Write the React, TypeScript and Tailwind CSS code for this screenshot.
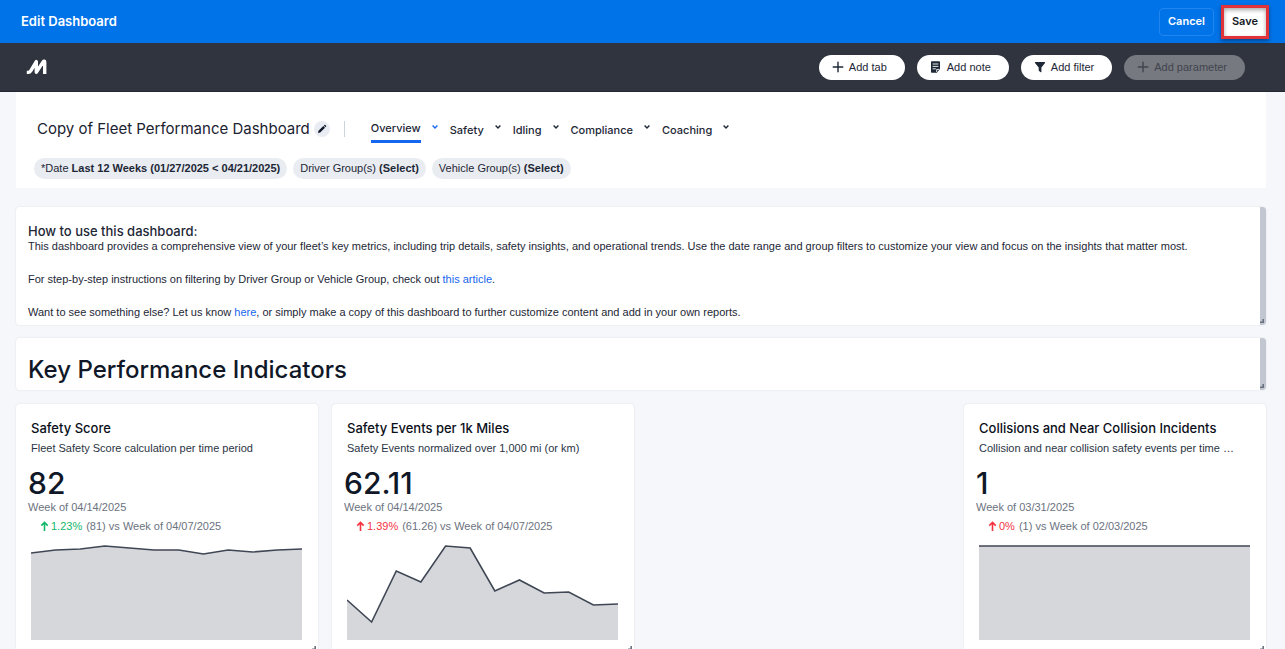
import React from 'react';

interface Kpi {
  title: string;
  description: string;
  value: string;
  week: string;
  change: string;
  compare: string;
  good?: boolean;
  points: number[];
}

const tabs = ['Overview', 'Safety', 'Idling', 'Compliance', 'Coaching'];

const filters = [
  { label: '*Date', value: 'Last 12 Weeks (01/27/2025 < 04/21/2025)' },
  { label: 'Driver Group(s)', value: '(Select)' },
  { label: 'Vehicle Group(s)', value: '(Select)' },
];

// points are distances from the top of the plot area
const kpis: (Kpi | null)[] = [
  {
    title: 'Safety Score',
    description: 'Fleet Safety Score calculation per time period',
    value: '82',
    week: 'Week of 04/14/2025',
    change: '1.23%',
    compare: '(81) vs Week of 04/07/2025',
    good: true,
    points: [9, 6, 5, 2, 4, 6, 6, 10, 6, 8, 6, 5],
  },
  {
    title: 'Safety Events per 1k Miles',
    description: 'Safety Events normalized over 1,000 mi (or km)',
    value: '62.11',
    week: 'Week of 04/14/2025',
    change: '1.39%',
    compare: '(61.26) vs Week of 04/07/2025',
    points: [56, 78, 27, 38, 2, 4, 47, 36, 49, 48, 61, 60],
  },
  null,
  {
    title: 'Collisions and Near Collision Incidents',
    description: 'Collision and near collision safety events per time …',
    value: '1',
    week: 'Week of 03/31/2025',
    change: '0%',
    compare: '(1) vs Week of 02/03/2025',
    points: [2, 2],
  },
];

function PlusIcon() {
  return (
    <svg width="12" height="12" viewBox="0 0 12 12" stroke="currentColor" strokeWidth="1.4" strokeLinecap="round">
      <path d="M6 1.2v9.6M1.2 6h9.6" />
    </svg>
  );
}

function NoteIcon() {
  return (
    <svg width="12" height="12" viewBox="0 0 12 12" fill="currentColor">
      <path d="M1.8.3h7.4a.8.8 0 0 1 .8.8v7l-3.2 3.6h-5a.8.8 0 0 1-.8-.8V1.1a.8.8 0 0 1 .8-.8z" />
      <path d="M2.6 3h5.8M2.6 5.4h5.8M2.6 7.8h3.2M6.7 11V8.4H9.400" fill="none" stroke="#fff" strokeWidth="0.9" />
    </svg>
  );
}

function FilterIcon() {
  return (
    <svg width="12" height="12" viewBox="0 0 12 12" fill="currentColor">
      <path d="M1.5 1h9a.6.6 0 0 1 .5 1L7.4 6.5v4.4a.4.4 0 0 1-.6.3L5 10a.6.6 0 0 1-.3-.5v-3L1 2a.6.6 0 0 1 .5-1z" />
    </svg>
  );
}

function ResizeHandle({ className }: { className: string }) {
  return (
    <svg className={`absolute ${className}`} width="4" height="4" viewBox="0 0 4 4" fill="none" stroke="#6b7280" strokeWidth="1.6">
      <path d="M3.2 0v3.2H0" />
    </svg>
  );
}

function Sparkline({ points }: { points: number[] }) {
  const step = 270 / (points.length - 1);
  const line = points.map((y, i) => `${(i * step).toFixed(1)},${y}`).join(' ');
  return (
    <svg className="block h-24 w-full" viewBox="0 0 270 96" preserveAspectRatio="none">
      <polygon points={`0,96 ${line} 270,96`} fill="#d6d7da" />
      <polyline points={line} fill="none" stroke="#3f4654" strokeWidth="1.6" vectorEffect="non-scaling-stroke" />
    </svg>
  );
}

function KpiCard({ kpi }: { kpi: Kpi }) {
  return (
    <section className="relative h-[248px] rounded-sm bg-white px-3 pt-4 text-[11px] leading-4 shadow-[0_0_2px_rgba(30,41,59,0.12)]">
      <div className="px-[3px]">
        <h3 className="truncate font-[Inter,sans-serif] text-[13px] leading-4 font-medium text-[#0b0f19]">{kpi.title}</h3>
        <p className="mt-1 truncate text-[#2a3444]">{kpi.description}</p>
      </div>
      <div className="mt-[11px] font-[Inter,sans-serif] text-3xl leading-8 font-medium text-[#101828]">{kpi.value}</div>
      <div className="text-[#6b7280]">{kpi.week}</div>
      <div className="mt-[3px] flex items-center pl-3 text-[#6b7280]">
        <span className={`flex items-center gap-0.5 ${kpi.good ? 'text-[#12b76a]' : 'text-[#f5333f]'}`}>
          <svg width="9" height="11" viewBox="0 0 9 11" fill="none" stroke="currentColor" strokeWidth="1.6">
            <path d="M4.5 10V1.5M1.3 4.6l3.2-3.2 3.2 3.2" />
          </svg>
          {kpi.change}
        </span>
        <span className="ml-1">{kpi.compare}</span>
      </div>
      <div className="mt-[10px] pr-1 pl-[3px]">
        <Sparkline points={kpi.points} />
      </div>
      <ResizeHandle className="right-0.5 bottom-0.5" />
    </section>
  );
}

export default function App() {
  const pill = 'flex h-[25px] items-center gap-[5px] rounded-full pl-[13px] pr-[18px] text-[11px]';

  return (
    <div className="h-screen overflow-hidden bg-[#f6f7fa] font-['Liberation_Sans',sans-serif] text-[#1d2736]">
      <header className="flex h-[43px] items-center justify-between bg-[#0073e8] pr-4 pl-[21px] font-[Inter,sans-serif] text-white">
        <h1 className="text-[13px] font-semibold">Edit Dashboard</h1>
        <div className="flex items-center gap-[7px]">
          <button className="h-7 rounded-sm border border-[#2185f0] px-2 text-[11px] font-semibold">Cancel</button>
          <button className="h-[34px] border-3 border-[#e0343a] bg-white px-2 text-[11px] font-semibold text-[#15181e] shadow-[0_2px_4px_rgba(0,0,0,0.4),inset_0_2px_4px_rgba(0,0,0,0.35)]">
            Save
          </button>
        </div>
      </header>

      <div className="flex h-[49px] items-center justify-between border-b border-[#242733] bg-[#30343f] pr-10 pl-[26px]">
        <svg width="21" height="16" viewBox="0 0 21 16" fill="none" stroke="#fff" strokeWidth="3.4" strokeLinejoin="round">
          <path d="M.8 13.4h1.400c1.300 0 2-.5 2.700-1.700L10.300 2.600v10.600L17.300 2.600c.6-.8 1.400-.6 1.400.4v12" />
        </svg>
        <div className="flex items-center gap-3">
          <button className={`${pill} bg-white`}>
            <PlusIcon />
            Add tab
          </button>
          <button className={`${pill} bg-white`}>
            <NoteIcon />
            Add note
          </button>
          <button className={`${pill} bg-white`}>
            <FilterIcon />
            Add filter
          </button>
          <button disabled className={`${pill} bg-[#777980] text-[#40444e]`}>
            <PlusIcon />
            Add parameter
          </button>
        </div>
      </div>

      <main className="pr-[19px] pl-4">
        <div className="bg-white px-[18px] pt-[23px] pb-[9px]">
          <div className="flex h-7 items-center pl-[3px] font-[Inter,sans-serif]">
            <h2 className="text-[15px] leading-5 text-[#1a2230]">Copy of Fleet Performance Dashboard</h2>
            <button aria-label="Rename dashboard" className="ml-1 flex size-4 items-center justify-center rounded-full bg-[#e9ecf2]">
              <svg width="10" height="10" viewBox="0 0 10 10" fill="#101828">
                <path d="M1 9l.5-2.2 4.8-4.8 1.7 1.7-4.8 4.8zM6.8 1.5l.6-.6a.6.6 0 0 1 .8 0l.9.9a.6.6 0 0 1 0 .8l-.6.6z" />
              </svg>
            </button>
            <div className="ml-[14px] h-4 w-px bg-[#cfd3da]" />
            <nav className="ml-[26px] flex items-center gap-3">
              {tabs.map((tab, i) => (
                <button key={tab} className="flex items-start gap-[11px] text-[11px] leading-4 font-medium">
                  <span className={i === 0 ? 'border-b-3 border-[#1766f0] py-1' : 'pt-1.5 pb-1'}>{tab}</span>
                  <svg
                    className={i === 0 ? 'mt-2 text-[#1766f0]' : 'mt-2'}
                    width="6"
                    height="6"
                    viewBox="0 0 6 6"
                    fill="none"
                    stroke="currentColor"
                    strokeWidth="1.4"
                  >
                    <path d="M.6 1.6L3 4l2.4-2.4" />
                  </svg>
                </button>
              ))}
            </nav>
          </div>
          <div className="mt-[15px] flex gap-1.5">
            {filters.map((f) => (
              <button key={f.label} className="h-[21px] rounded-full bg-[#e9ecf1] px-[7px] text-[11px]">
                {f.label} <span className="font-semibold">{f.value}</span>
              </button>
            ))}
          </div>
        </div>

        <section className="relative mt-[19px] h-[118px] rounded-sm border-r-[6px] border-[#c1c6d1] bg-white pt-[17px] pl-3 text-[11px] leading-4 shadow-[0_0_2px_rgba(30,41,59,0.12)]">
          <h3 className="font-[Inter,sans-serif] text-[13px] leading-[14px] font-medium">How to use this dashboard:</h3>
          <p>
            This dashboard provides a comprehensive view of your fleet’s key metrics, including trip details, safety
            insights, and operational trends. Use the date range and group filters to customize your view and focus on
            the insights that matter most.
          </p>
          <p className="mt-[17px]">
            For step-by-step instructions on filtering by Driver Group or Vehicle Group, check out{' '}
            <a href="#article" className="text-[#1766f0]">this article</a>.
          </p>
          <p className="mt-[17px]">
            Want to see something else? Let us know <a href="#feedback" className="text-[#1766f0]">here</a>, or simply
            make a copy of this dashboard to further customize content and add in your own reports.
          </p>
          <ResizeHandle className="-right-1 bottom-0.5" />
        </section>

        <section className="relative mt-[13px] flex h-[52px] items-center rounded-sm border-r-[6px] border-[#c1c6d1] bg-white pt-3 pl-3 shadow-[0_0_2px_rgba(30,41,59,0.12)]">
          <h2 className="font-[Inter,sans-serif] text-2xl font-medium text-[#101828]">Key Performance Indicators</h2>
          <ResizeHandle className="-right-1 bottom-0.5" />
        </section>

        <div className="mt-[14px] grid grid-cols-4 gap-[14px]">
          {kpis.map((kpi, i) => (kpi ? <KpiCard key={kpi.title} kpi={kpi} /> : <div key={i} />))}
        </div>
      </main>
    </div>
  );
}
